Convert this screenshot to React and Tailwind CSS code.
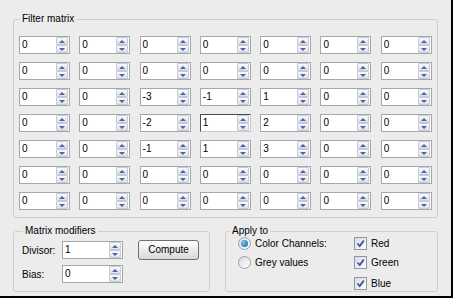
import React from "react";

const matrix = [
  [0, 0, 0, 0, 0, 0, 0],
  [0, 0, 0, 0, 0, 0, 0],
  [0, 0, -3, -1, 1, 0, 0],
  [0, 0, -2, 1, 2, 0, 0],
  [0, 0, -1, 1, 3, 0, 0],
  [0, 0, 0, 0, 0, 0, 0],
  [0, 0, 0, 0, 0, 0, 0],
];

function SpinHalf({ up }) {
  return (
    <div className="flex h-[8px] items-center justify-center rounded-[1px] border border-[#c5cad6] bg-linear-to-b from-[#fafafa] to-[#dde1ea]">
      <svg width="6" height="3" viewBox="0 0 6 3">
        {up ? (
          <polygon points="0,3 6,3 3,0" fill="#4d65a5" />
        ) : (
          <polygon points="0,0 6,0 3,3" fill="#4d65a5" />
        )}
      </svg>
    </div>
  );
}

function SpinBox({ value, wide, focused }) {
  return (
    <div
      className={
        focused
          ? "flex h-[18px] w-[51px] border border-t-[#4a4a4a] border-l-[#4a4a4a] border-r-[#c9c9c9] border-b-[#c9c9c9] bg-white"
          : wide
          ? "flex h-[18px] w-[61px] border border-[#a5a7ab] bg-white"
          : "flex h-[18px] w-[51px] border border-[#a5a7ab] bg-white"
      }>
      <span className="flex-1 pl-[2px] leading-[16px]">{value}</span>
      <div className="mr-[1px] flex w-[12px] flex-col">
        <SpinHalf up />
        <SpinHalf />
      </div>
    </div>
  );
}

function Radio({ checked, label }) {
  return (
    <div className="flex h-[13px] items-center gap-[4px]">
      <div className="flex h-[13px] w-[13px] items-center justify-center rounded-full border border-[#9a9ea6] bg-linear-to-br from-[#dcdcdc] to-white">
        {checked && (
          <div className="h-[7px] w-[7px] rounded-full bg-radial-[at_35%_35%] from-[#7cc6f2] to-[#0a5a9c]" />
        )}
      </div>
      <span>{label}</span>
    </div>
  );
}

function Check({ label }) {
  return (
    <div className="flex h-[13px] items-center gap-[4px]">
      <div className="flex h-[13px] w-[13px] items-center justify-center border border-[#8c96a8] bg-linear-to-br from-[#dadada] to-white">
        <svg width="9" height="9" viewBox="0 0 9 9">
          <path d="M1.5 4.5 L3.7 7 L7.8 1.6" stroke="#3558a4" strokeWidth="1.8" fill="none" />
        </svg>
      </div>
      <span>{label}</span>
    </div>
  );
}

export default function App() {
  return (
    <div className="h-[298px] w-[453px] bg-[#ececec] font-['Liberation_Sans',Arial,sans-serif] text-[10px] text-black shadow-[inset_-2px_-2px_0_#000]">
      <div className="flex flex-col pl-[13px] pt-[13px]">
        <fieldset className="h-[205px] w-[425px] rounded-[3px] border border-[#cfcfcf] px-[5px] pt-[11px]">
          <legend className="ml-[1px] px-[2px] leading-[12px]">Filter matrix</legend>
          <div className="grid grid-cols-7 gap-x-[9px] gap-y-[8px]">
            {matrix.map((row, r) =>
              row.map((v, c) => (
                <SpinBox key={`${r}-${c}`} value={v} focused={r === 3 && c === 3} />
              ))
            )}
          </div>
        </fieldset>

        <div className="mt-[7px] flex gap-[15px]">
          <fieldset className="h-[67px] w-[197px] rounded-[3px] border border-[#cfcfcf] pl-[8px]">
            <legend className="ml-[1px] px-[2px] leading-[12px]">Matrix modifiers</legend>
            <div className="flex items-start">
              <div className="flex flex-col gap-[6px] pt-[4px]">
                <div className="flex items-center">
                  <span className="w-[40px]">Divisor:</span>
                  <SpinBox value={1} wide />
                </div>
                <div className="flex items-center">
                  <span className="w-[40px]">Bias:</span>
                  <SpinBox value={0} wide />
                </div>
              </div>
              <button className="ml-[15px] mt-[3px] h-[20px] w-[61px] rounded-[3px] border border-[#707070] bg-linear-to-b from-white to-[#d8d8d8] text-center leading-[18px]">
                Compute
              </button>
            </div>
          </fieldset>

          <fieldset className="h-[67px] w-[213px] rounded-[3px] border border-[#cfcfcf] pl-[12px]">
            <legend className="ml-[-8px] px-[2px] leading-[12px]">Apply to</legend>
            <div className="flex">
              <div className="flex w-[116px] flex-col gap-[6px]">
                <Radio checked label="Color Channels:" />
                <Radio label="Grey values" />
              </div>
              <div className="flex flex-col">
                <Check label="Red" />
                <div className="mt-[6px]">
                  <Check label="Green" />
                </div>
                <div className="mt-[8px]">
                  <Check label="Blue" />
                </div>
              </div>
            </div>
          </fieldset>
        </div>
      </div>
    </div>
  );
}
